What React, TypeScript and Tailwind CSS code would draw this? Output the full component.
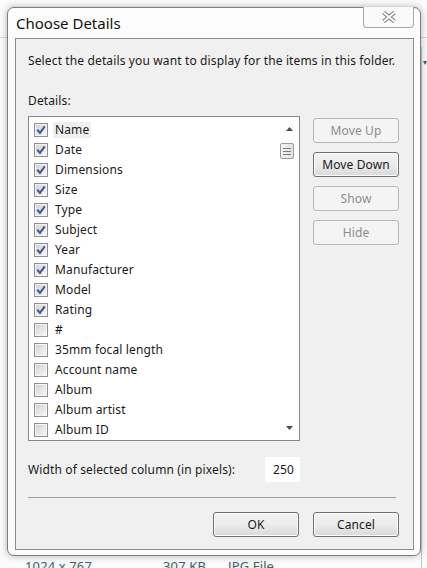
import React from "react"

const items: [string, boolean][] = [
  ["Name", true],
  ["Date", true],
  ["Dimensions", true],
  ["Size", true],
  ["Type", true],
  ["Subject", true],
  ["Year", true],
  ["Manufacturer", true],
  ["Model", true],
  ["Rating", true],
  ["#", false],
  ["35mm focal length", false],
  ["Account name", false],
  ["Album", false],
  ["Album artist", false],
  ["Album ID", false],
]

const font = "font-['Noto_Sans',sans-serif]"

const Checkbox = ({ checked }: { checked: boolean }) => (
  <div className="w-[14px] h-[14px] border border-[#8f8f8f] bg-[#f4f4f4] p-px shrink-0">
    <div className="w-full h-full bg-gradient-to-br from-[#d4d4d4] to-[#f6f6f6] flex items-center justify-center">
      {checked && (
        <svg width="10" height="10" viewBox="0 0 10 10">
          <path d="M1.3 4.8 L4 7.9 L8.8 1.4" fill="none" stroke="#46598c" strokeWidth="2.1" />
        </svg>
      )}
    </div>
  </div>
)

const WinButton = ({ label, disabled }: { label: string; disabled?: boolean }) => (
  <div
    className={
      disabled
        ? "w-[86px] h-[25px] rounded-[3px] border border-[#b5b8bb] bg-[#f4f4f4] text-[#8d8d8d] flex items-center justify-center"
        : "w-[86px] h-[25px] rounded-[3px] border border-[#707070] bg-gradient-to-b from-[#f3f3f3] via-[#ebebeb] to-[#d9d9d9] text-[#1a1a1a] flex items-center justify-center shadow-[inset_0_0_0_1px_#fcfcfc]"
    }
  >
    {label}
  </div>
)

const Arrow = ({ up }: { up?: boolean }) => (
  <svg width="7" height="4" viewBox="0 0 7 4">
    <path d={up ? "M0 4 L3.5 0 L7 4 Z" : "M0 0 L3.5 4 L7 0 Z"} fill="#4d4d4d" />
  </svg>
)

export default function App() {
  return (
    <div className={`relative w-[427px] h-[568px] overflow-hidden bg-[#fbfbfb] ${font} text-[12px] leading-[16px] tracking-[0.13px] text-[#1a1a1a]`}>
      {/* explorer behind the dialog */}
      <div className="absolute left-0 right-0 top-[37px] h-px bg-[#d9d9d9]" />
      <div className="absolute left-[421px] top-[47px] bottom-0 w-px bg-[#c8c8c8]" />
      <div className="absolute left-[423px] top-[54px] text-[8px] text-[#555]">▾</div>
      <div className="absolute left-[25px] top-[558px] flex text-[13px] text-[#5a5a5a] [text-shadow:0_0_5px_#bfe8ff]">
        <span className="w-[138px]">1024 x 767</span>
        <span className="w-[65px]">307 KB</span>
        <span>JPG File</span>
      </div>

      {/* dialog window */}
      <div className="absolute left-[7px] top-[7px] w-[414px] rounded-[7px] border border-[#7c7c7c] bg-[#fcfcfc] pb-[5px] shadow-[0_0_7px_rgba(0,0,0,0.3)]">
        <div className="h-[30px] flex justify-between">
          <div className="pl-[8px] pt-[5px] text-[15px] leading-[20px] tracking-normal text-[#111]">Choose Details</div>
          <div className="mr-[6px] -mt-px w-[51px] h-[21px] border border-[#a9a9a9] border-t-0 rounded-b-[4px] bg-[#fafafa] flex items-center justify-center">
            <svg width="16" height="12" viewBox="0 0 16 12">
              <path d="M2.5 1.5 L13.5 10.5 M13.5 1.5 L2.5 10.5" stroke="#7a7a7a" strokeWidth="4" />
              <path d="M2.5 1.5 L13.5 10.5 M13.5 1.5 L2.5 10.5" stroke="#ffffff" strokeWidth="2" />
            </svg>
          </div>
        </div>

        <div className="ml-[7px] w-[399px] h-[512px] border border-[#8e8e8e] bg-[#f0f0f0] pl-[12px] pt-[14px]">
          <div>Select the details you want to display for the items in this folder.</div>
          <div className="mt-[24px]">Details:</div>

          <div className="mt-[7px] flex gap-[13px]">
            <div className="w-[272px] h-[325px] border border-[#828790] bg-white flex">
              <div className="flex-1 pt-[3px] pl-[5px] overflow-hidden">
                {items.map(([name, checked], i) => (
                  <div key={name} className="h-[20px] flex items-center gap-[5px]">
                    <Checkbox checked={checked} />
                    <span className={i === 0 ? "px-[2px] bg-[#efefef]" : "px-[2px]"}>{name}</span>
                  </div>
                ))}
              </div>
              <div className="w-[19px] flex flex-col">
                <div className="h-[24px] flex items-center justify-center">
                  <Arrow up />
                </div>
                <div className="mt-[2px] w-[14px] h-[16px] rounded-[2px] border border-[#9b9b9b] bg-gradient-to-r from-[#f4f4f4] to-[#e2e2e2] flex flex-col items-center justify-center gap-[2px]">
                  <div className="w-[8px] h-px bg-[#7a7a7a]" />
                  <div className="w-[8px] h-px bg-[#7a7a7a]" />
                  <div className="w-[8px] h-px bg-[#7a7a7a]" />
                </div>
                <div className="flex-1" />
                <div className="h-[24px] flex items-center justify-center">
                  <Arrow />
                </div>
              </div>
            </div>

            <div className="pt-[2px] flex flex-col gap-[9px]">
              <WinButton label="Move Up" disabled />
              <WinButton label="Move Down" />
              <WinButton label="Show" disabled />
              <WinButton label="Hide" disabled />
            </div>
          </div>

          <div className="mt-[16px] w-[272px] h-[25px] flex items-center justify-between">
            <span>Width of selected column (in pixels):</span>
            <div className="w-[35px] h-[25px] bg-white flex items-center justify-end pr-[6px]">250</div>
          </div>

          <div className="mt-[15px] w-[368px] h-px bg-[#a0a0a0]" />

          <div className="mt-[14px] w-[371px] flex justify-end gap-[14px]">
            <WinButton label="OK" />
            <WinButton label="Cancel" />
          </div>
        </div>
      </div>
    </div>
  )
}
